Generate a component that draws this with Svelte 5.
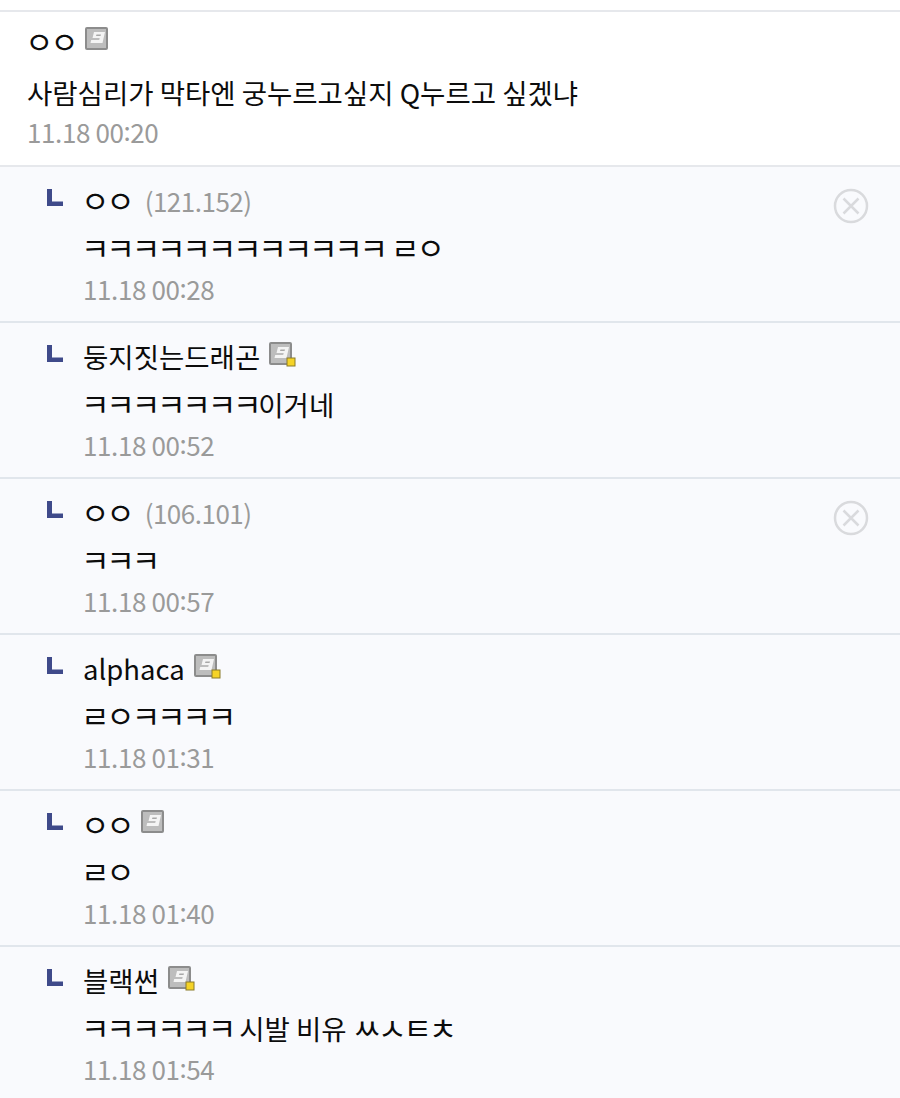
<script>
	const post = { name: 'ㅇㅇ', text: '사람심리가 막타엔 궁누르고싶지 Q누르고 싶겠냐', date: '11.18 00:20' };

	const replies = [
		{ name: 'ㅇㅇ', ip: '(121.152)', text: 'ㅋㅋㅋㅋㅋㅋㅋㅋㅋㅋㅋㅋ ㄹㅇ', date: '11.18 00:28', del: true },
		{ name: '둥지짓는드래곤', badge: 'fix', text: 'ㅋㅋㅋㅋㅋㅋㅋ이거네', date: '11.18 00:52' },
		{ name: 'ㅇㅇ', ip: '(106.101)', text: 'ㅋㅋㅋ', date: '11.18 00:57', del: true },
		{ name: 'alphaca', badge: 'fix', text: 'ㄹㅇㅋㅋㅋㅋ', date: '11.18 01:31' },
		{ name: 'ㅇㅇ', badge: 'plain', text: 'ㄹㅇ', date: '11.18 01:40' },
		{ name: '블랙썬', badge: 'fix', text: 'ㅋㅋㅋㅋㅋㅋ 시발 비유 ㅆㅅㅌㅊ', date: '11.18 01:54' }
	];

	// bare jamo render smaller here than in the app, so they get their own span
	const isJamo = (ch) => ch >= '\u3131' && ch <= '\u3163';
</script>

{#snippet badge(kind)}
	<svg class="badge" width="28" height="26" viewBox="0 0 28 26">
		<rect x="1" y="1" width="23" height="23" rx="2" fill="#8c8c8c" />
		<rect x="3" y="3" width="19" height="19" fill="#bdbdbd" />
		<path d="M10 6h11l-2.500 11H6.500l.7-3h8l.5-2H8.500z" fill="#f4f4f4" />
		<path d="M12.500 8.500h4.500l-.5 1.500h-4.500z" fill="#a8a8a8" />
		{#if kind === 'fix'}
			<rect x="19" y="17" width="8" height="8" fill="#f5d327" stroke="#8a7a2a" stroke-width="1" />
		{/if}
	</svg>
{/snippet}

{#snippet glyphs(str)}
	{#each str as ch}{#if isJamo(ch)}<span class="jamo">{ch}</span>{:else}{ch}{/if}{/each}
{/snippet}

{#snippet stamp(str)}
	{#each str as ch}{#if ch === ':'}<span class="colon">{ch}</span>{:else}{ch}{/if}{/each}
{/snippet}

<main class="list">
	<article class="post">
		<div class="name-line">
			<span class="name">{@render glyphs(post.name)}</span>
			{@render badge('plain')}
		</div>
		<p class="text">{post.text}</p>
		<p class="date">{@render stamp(post.date)}</p>
	</article>

	{#each replies as r}
		<article class="reply">
			<svg class="arrow" width="16" height="17" viewBox="0 0 16 17">
				<path d="M0 0h5v12.500h11V17H0z" fill="#3f4a8a" />
			</svg>
			<div class="body">
				<div class="name-line">
					<span class="name">{@render glyphs(r.name)}</span>
					{#if r.ip}<span class="ip">{r.ip}</span>{/if}
					{#if r.badge}{@render badge(r.badge)}{/if}
				</div>
				<p class="text">{@render glyphs(r.text)}</p>
				<p class="date">{@render stamp(r.date)}</p>
			</div>
			{#if r.del}
				<svg class="del" width="36" height="36" viewBox="0 0 36 36">
					<circle cx="18" cy="18" r="16" fill="none" stroke="#d9dadd" stroke-width="2.500" />
					<path d="M10.500 10.500l15 15M25.500 10.500l-15 15" stroke="#d9dadd" stroke-width="2.500" />
				</svg>
			{/if}
		</article>
	{/each}
</main>

<style>
	:global(body) {
		margin: 0;
		background: #fff;
		overflow: hidden;
	}

	.list {
		padding-top: 10px;
		font-family: 'Noto Sans CJK KR', 'Noto Sans', sans-serif;
		color: #0c0c0c;
	}

	.post {
		box-sizing: border-box;
		height: 157px;
		padding: 5px 0 0 27px;
		border-top: 2px solid #e6e8ec;
		border-bottom: 2px solid #e6e8ec;
	}

	.post .text {
		line-height: 52px;
		margin-top: 1px;
	}

	.post .date {
		line-height: 28px;
	}

	.reply {
		display: flex;
		align-items: flex-start;
		box-sizing: border-box;
		height: 156px;
		padding-left: 47px;
		padding-right: 31px;
		background: #f9fafd;
		border-bottom: 2px solid #e1e6ec;
	}

	.arrow {
		flex: none;
		margin-top: 22px;
		margin-right: 21px;
	}

	.body {
		flex: 1;
		padding-top: 9px;
		margin-left: -1px;
	}

	.name-line {
		display: flex;
		align-items: center;
		height: 48px;
		gap: 8px;
	}

	.name {
		font-size: 27.500px;
		line-height: 40px;
		white-space: nowrap;
	}

	.jamo {
		font-size: 31px;
		letter-spacing: -3.200px;
	}

	.jamo:first-child {
		margin-left: -2px;
	}

	.ip {
		margin-left: 5px;
		font-size: 26px;
		color: #9a9a9a;
		letter-spacing: -0.5px;
	}

	.badge {
		flex: none;
		margin-top: -5px;
	}

	.text {
		margin: 0;
		font-size: 27.500px;
		line-height: 46px;
		white-space: nowrap;
	}

	.date {
		margin: 0;
		font-size: 26px;
		line-height: 36px;
		color: #9a9a9a;
		letter-spacing: -0.4px;
	}

	.colon {
		display: inline-block;
		transform: translateY(-2px);
	}

	.del {
		flex: none;
		margin-top: 21px;
	}
</style>
